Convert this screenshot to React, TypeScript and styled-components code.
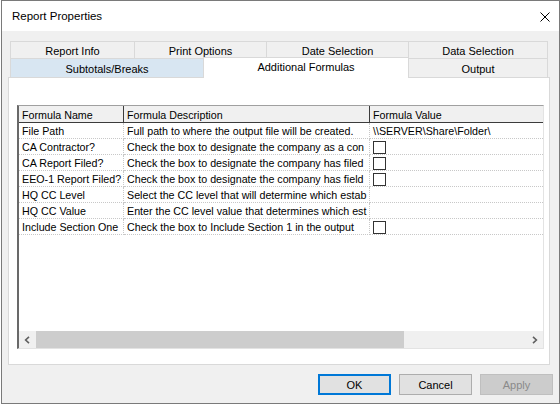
import React from "react";
import styled, { createGlobalStyle } from "styled-components";

const GlobalStyle = createGlobalStyle`
  html, body {
    margin: 0;
    padding: 0;
    background: #ffffff;
  }
  * {
    box-sizing: border-box;
  }
`;

const Window = styled.div`
  width: 559px;
  height: 404px;
  margin-left: 1px;
  display: flex;
  flex-direction: column;
  background: #f0f0f0;
  border: 1px solid #7a7a7a;
  font-family: "Liberation Sans", Arial, sans-serif;
  font-size: 11px;
  color: #000;
  overflow: hidden;
`;

const TitleBar = styled.div`
  height: 30px;
  flex-shrink: 0;
  background: #fff;
  display: flex;
  align-items: center;
  justify-content: space-between;
  padding: 0 9px 0 10px;
  font-size: 11.5px;
`;

const CloseIcon = styled.svg`
  width: 10px;
  height: 10px;
  margin-top: 1px;
`;

const Body = styled.div`
  flex: 1;
  display: flex;
  flex-direction: column;
  padding: 10px 6px 0 6px;
`;

const TabControl = styled.div`
  margin-right: 3px;
  display: flex;
  flex-direction: column;
`;

const TabStrip = styled.div`
  padding: 0 2px;
  display: flex;
  flex-direction: column;
`;

const TabRow = styled.div<{ $h: number }>`
  display: flex;
  align-items: flex-end;
  height: ${(p) => p.$h}px;
`;

const Tab = styled.div<{ $w: number; $selected?: boolean; $hover?: boolean }>`
  width: ${(p) => p.$w}px;
  height: ${(p) => (p.$selected ? "21px" : "100%")};
  margin-bottom: ${(p) => (p.$selected ? "-1px" : "0")};
  position: relative;
  z-index: ${(p) => (p.$selected ? 1 : 0)};
  display: flex;
  align-items: center;
  justify-content: center;
  padding: ${(p) => (p.$selected ? "0 0 2px 0" : "2px 0 0 0")};
  background: ${(p) => (p.$selected ? "#ffffff" : p.$hover ? "#d8e6f2" : "#f0f0f0")};
  border-top: 1px solid #d9d9d9;
  border-left: 1px solid #d9d9d9;
  white-space: nowrap;
  &:last-child {
    border-right: 1px solid #d9d9d9;
  }
`;

const Panel = styled.div`
  height: 288px;
  background: #fff;
  border: 1px solid #d9d9d9;
  padding: 27px 0 0 8px;
`;

const Grid = styled.div`
  width: 527px;
  height: 244px;
  display: flex;
  flex-direction: column;
  background: #fff;
  border-top: 1px solid #a0a0a0;
  border-left: 2px solid #696969;
  border-right: 1px solid #e3e3e3;
  border-bottom: 1px solid #e3e3e3;
  font-family: "Liberation Sans", Arial, sans-serif;
  font-size: 10.7px;
`;

const columns = "105px 246px 173px";

const HeaderRow = styled.div`
  display: grid;
  grid-template-columns: ${columns};
  height: 17px;
  background: #f0f0f0;
  border-bottom: 1px solid #3c3c3c;
`;

const HeaderCell = styled.div<{ $last?: boolean }>`
  display: flex;
  align-items: center;
  padding: 1px 0 0 3px;
  border-right: ${(p) => (p.$last ? "none" : "1px solid #3c3c3c")};
  white-space: nowrap;
  overflow: hidden;
`;

const Row = styled.div`
  display: grid;
  grid-template-columns: ${columns};
  height: 16px;
`;

const Cell = styled.div<{ $last?: boolean }>`
  display: flex;
  align-items: center;
  padding: 0 0 0 3px;
  border-bottom: 1px dotted #c8c8c8;
  border-right: ${(p) => (p.$last ? "none" : "1px dotted #c8c8c8")};
  white-space: nowrap;
  overflow: hidden;
`;

const CheckBox = styled.span`
  flex-shrink: 0;
  width: 13px;
  height: 13px;
  margin-top: 2px;
  border: 1px solid #333333;
  background: #fff;
`;

const Filler = styled.div`
  flex: 1;
`;

const HScroll = styled.div`
  height: 17px;
  display: flex;
  background: #f0f0f0;
`;

const ScrollButton = styled.div`
  width: 17px;
  display: flex;
  align-items: center;
  justify-content: center;
`;

const ScrollThumb = styled.div`
  width: 368px;
  background: #cdcdcd;
`;

const ScrollTrack = styled.div`
  flex: 1;
`;

const ButtonBar = styled.div`
  display: flex;
  justify-content: flex-end;
  gap: 8px;
  margin-top: 9px;
`;

const Button = styled.button<{ $variant?: "default" | "disabled" }>`
  width: 73px;
  height: 21px;
  padding: 0;
  font-family: "Liberation Sans", Arial, sans-serif;
  font-size: 11px;
  color: ${(p) => (p.$variant === "disabled" ? "#8a8a8a" : "#000")};
  background: ${(p) => (p.$variant === "disabled" ? "#cccccc" : "#e1e1e1")};
  border: ${(p) =>
    p.$variant === "default"
      ? "2px solid #0078d7"
      : p.$variant === "disabled"
      ? "1px solid #bfbfbf"
      : "1px solid #adadad"};
`;

const Chevron = ({ dir }: { dir: "left" | "right" }) => (
  <svg width="7" height="8" viewBox="0 0 7 8">
    <polyline
      points={dir === "left" ? "5,0.8 1.6,4 5,7.2" : "2,0.8 5.4,4 2,7.2"}
      fill="none"
      stroke="#606060"
      strokeWidth="1.6"
    />
  </svg>
);

type FormulaRow = { name: string; description: string; value?: string; check?: boolean };

// descriptions as far as the column shows them
const rows: FormulaRow[] = [
  {
    name: "File Path",
    description: "Full path to where the output file will be created.",
    value: "\\\\SERVER\\Share\\Folder\\",
  },
  {
    name: "CA Contractor?",
    description: "Check the box to designate the company as a con",
    check: true,
  },
  {
    name: "CA Report Filed?",
    description: "Check the box to designate the company has filed",
    check: true,
  },
  {
    name: "EEO-1 Report Filed?",
    description: "Check the box to designate the company has field",
    check: true,
  },
  {
    name: "HQ CC Level",
    description: "Select the CC level that will determine which estab",
  },
  {
    name: "HQ CC Value",
    description: "Enter the CC level value that determines which est",
  },
  {
    name: "Include Section One",
    description: "Check the box to Include Section 1 in the output",
    check: true,
  },
];

const topTabs = [
  { label: "Report Info", w: 124 },
  { label: "Print Options", w: 132 },
  { label: "Date Selection", w: 142 },
  { label: "Data Selection", w: 140 },
];

const frontTabs = [
  { label: "Subtotals/Breaks", w: 193, hover: true },
  { label: "Additional Formulas", w: 205, selected: true },
  { label: "Output", w: 140 },
];

export default function App() {
  return (
    <>
      <GlobalStyle />
      <Window>
        <TitleBar>
          <span>Report Properties</span>
          <CloseIcon viewBox="0 0 10 10">
            <path d="M0.5 0.5 L9.5 9.5 M9.5 0.5 L0.5 9.5" stroke="#000" strokeWidth="1" />
          </CloseIcon>
        </TitleBar>
        <Body>
          <TabControl>
            <TabStrip>
              <TabRow $h={17}>
                {topTabs.map((t) => (
                  <Tab key={t.label} $w={t.w}>
                    {t.label}
                  </Tab>
                ))}
              </TabRow>
              <TabRow $h={19}>
                {frontTabs.map((t) => (
                  <Tab key={t.label} $w={t.w} $selected={t.selected} $hover={t.hover}>
                    {t.label}
                  </Tab>
                ))}
              </TabRow>
            </TabStrip>
            <Panel>
              <Grid>
                <HeaderRow>
                  <HeaderCell>Formula Name</HeaderCell>
                  <HeaderCell>Formula Description</HeaderCell>
                  <HeaderCell $last>Formula Value</HeaderCell>
                </HeaderRow>
                {rows.map((r) => (
                  <Row key={r.name}>
                    <Cell>{r.name}</Cell>
                    <Cell>{r.description}</Cell>
                    <Cell $last>{r.check ? <CheckBox /> : r.value}</Cell>
                  </Row>
                ))}
                <Filler />
                <HScroll>
                  <ScrollButton>
                    <Chevron dir="left" />
                  </ScrollButton>
                  <ScrollThumb />
                  <ScrollTrack />
                  <ScrollButton>
                    <Chevron dir="right" />
                  </ScrollButton>
                </HScroll>
              </Grid>
            </Panel>
          </TabControl>
          <ButtonBar>
            <Button $variant="default">OK</Button>
            <Button>Cancel</Button>
            <Button $variant="disabled">Apply</Button>
          </ButtonBar>
        </Body>
      </Window>
    </>
  );
}
